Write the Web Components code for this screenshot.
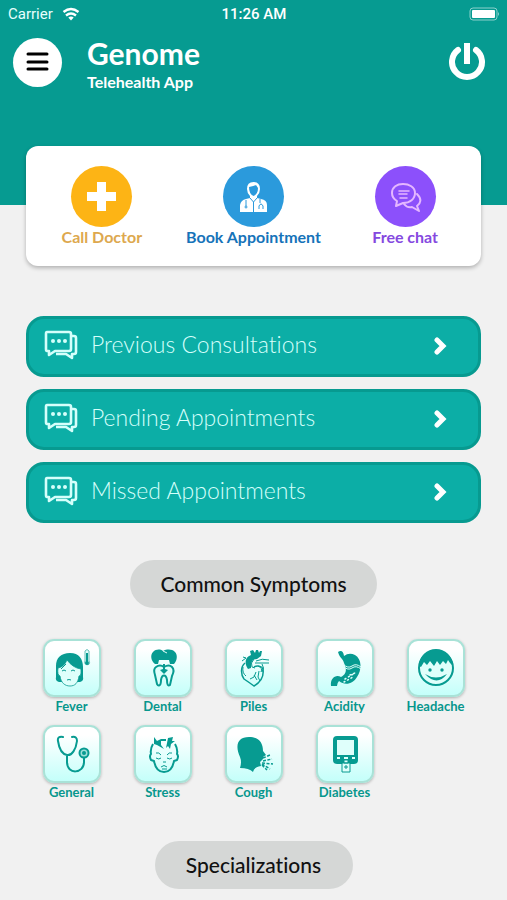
<!DOCTYPE html>
<html lang="en">
<head>
<meta charset="utf-8">
<meta name="viewport" content="width=device-width, initial-scale=1">
<title>Genome Telehealth App</title>
<style>
  html { background: #f1f1f1; }
  body { margin: 0; font-family: Lato, "Open Sans", sans-serif; font-variant-ligatures: none; }
</style>
</head>
<body>
<telehealth-app></telehealth-app>

<script>
const define = (name, html, setup) => {
  const template = document.createElement('template');
  template.innerHTML = html;
  customElements.define(name, class extends HTMLElement {
    constructor() {
      super();
      this.attachShadow({ mode: 'open' }).append(template.content.cloneNode(true));
    }
    connectedCallback() { if (setup) setup(this, this.shadowRoot); }
  });
};

const icons = {
  menu: `<g stroke="#000" stroke-width="3" stroke-linecap="round"><path d="M15 16H34M15 24H34M15 31H34"/></g>`,
  power: `<g fill="none" stroke="#fff" stroke-linecap="round" stroke-width="6"><path d="M9 8A15 15 0 1 0 27 8"/><path stroke-linecap="butt" d="M18 1V22"/></g>`,
  cross: `<path fill="#fff" d="M26 16h9v10h10v9H35v10h-9V35H16v-9h10z"/>`,
  doctor: `<g fill="#fff"><path d="M17 46v-7q1-5 6-6l4-1v-2q-3-3-3-7 0-7 6.500-7t6.500 7q0 4-3 7v2l4 1q6 1 6 6v7z"/></g>
    <path fill="#2b9adc" d="M26 21q5-1 7-2l2 3q0 6-4.500 8Q26 28 26 21z"/>
    <g fill="none" stroke="#2b9adc" stroke-width="1"><path d="M27 32l3.500 4 3.500-4M30.500 36v10M23 34v6M37 33v4M36 43v-3q2-4 4 0v3"/><circle cx="23" cy="41" r="1"/></g>`,
  chat: `<g fill="none" stroke="#e4b7ff" stroke-width="2" stroke-linejoin="round" stroke-linecap="round"><path d="M22 35q-5-3-5-8c0-6 5-9 11-9s12 3 12 9-5 10-12 10l-7 3z"/><path d="M42 28c5 5 4 9 0 12l2 5-7-4q-5 1-8-3"/><path stroke-width="1.500" d="M24 25h10M24 28h8M25 32h7"/></g>`,
  consult: `<g fill="none" stroke="#d5fffb" stroke-width="2.600" stroke-linejoin="round"><path d="M3 2h22q2 0 2 2v15q0 2-2 2H11l-6 4v-4H3q-1 0-1-2V4q0-2 1-2z"/><path d="M28 6h2q2 0 2 2v14q0 2-2 2h-2v4l-6-4H12"/></g><g fill="#d5fffb"><circle cx="9" cy="11" r="2"/><circle cx="15" cy="11" r="2"/><circle cx="21" cy="11" r="2"/></g>`,
  chevron: `<path fill="none" stroke="#fff" stroke-width="5" stroke-linecap="round" stroke-linejoin="miter" d="M4 3l6 6-6 6"/>`,
  wifi: `<g fill="none" stroke="#fff" stroke-width="2.4"><path d="M1.500 5q7.500-6 15 0M4 8.500q5-4 10 0"/></g><path fill="#fff" d="M6.300 10.500q2.700-2 5.400 0L9 13.500z"/>`,
  battery: `<rect x="1" y="1" width="27" height="12" rx="3" fill="none" stroke="#8bd0cb"/><rect x="3" y="3" width="23" height="8" rx="1" fill="#fff"/><path d="M29 5q2 2 0 4z" fill="#8bd0cb"/>`,
  Fever: `<path fill="#079b91" d="M16 43q-4-1-3-5V27C13 19 18 14 27 14s13 6 13 14v10q1 4-3 5z"/>
    <path fill="#dffffb" stroke="#079b91" stroke-width=".8" d="M15 29q6-1 9-8 6 8 14 9v4q0 3-2 3c-1 7-4 10-9 10s-9-3-10-10q-3-1-2-8z"/>
    <path fill="none" stroke="#079b91" stroke-width="1" d="M19 32q2-2 4 0m5 0q2-2 4 0M24 41q2-1 4 0M17 27l5-3M18 30l5-5"/>
    <path fill="#dffffb" stroke="#65bdb6" d="M42 22V12q2-3 4 0v10c3 5-6 5-4 0z"/><path stroke="#079b91" stroke-width="2" d="M44 14v10"/><circle cx="44" cy="24" r="2" fill="#079b91"/>`,
  Dental: `<path fill="#079b91" d="M21 25c-4-3-5-9-2-12s7-3 10-1c4-2 9-2 12 1s2 9-1 12h-4l-1-4H25l-1 4z"/><path stroke="#dffffb" fill="none" d="M29 12l4 2"/>
    <path fill="#dffffb" stroke="#079b91" stroke-width="2" d="M22 28q4-3 8 0 5-3 8 0c3 3 1 7 0 9l-2 9q-3 2-3-5c-1-6-5-6-6 0 0 7-3 6-4 4l-2-9c-1-3-2-6 1-8z"/><path fill="#079b91" d="M29 25h2v5l3 1-4 4-4-4 3-1z"/>`,
  Piles: `<path fill="#079b91" d="M23 30c-4-6-3-12 3-14l-1-4 3-1 2 3 1-3h2l1 3 1-2h2l-1 5-4 3c-5 0-6 3-6 9z"/>
    <g fill="none" stroke="#079b91" stroke-width="1"><path stroke-width="1.500" d="M20 24c-5 4-4 12-1 16q6 4 10 7c7-4 10-10 9-17-1-3-6-4-9-2"/><path d="M30 24h14M31 22q6-3 13-1M18 18l3 1M17 22l4-3M29 20q-4 4-2 8l3 1M33 27q5 2 3 6M31 33l-2 5-4 2M29 36l3 5M34 32l-1 6 2 4M18 28q-1 6 3 9M37 25q3 4 0 8"/></g>`,
  Acidity: `<path fill="#079b91" d="M22 13q5-3 6 4 5-4 11-1c7 4 7 15 2 22-4 7-12 9-18 4q-2 2-2 5h-6c-1-8 5-12 10-9 8-4 4-11 3-14-1-5-4-4-6-11z"/>
    <path fill="none" stroke="#dffffb" stroke-width="1" d="M27 25q5 5 9 2t9 1M27 27q5 5 9 2t9 1"/><path stroke="#dffffb" stroke-width="1.500" stroke-linecap="round" stroke-dasharray="1 3" d="M29 40l10-6M28 43l9-5M34 36l5-2"/>`,
  Headache: `<circle cx="29" cy="29" r="17" fill="#dffffb" stroke="#079b91" stroke-width="2"/><path fill="#079b91" d="M12 27c0-10 8-17 17-17s17 7 17 17l-3-3-2-3-2 4-3-3-3 4-3-4-3 5-4-5-3 4-3-3-3 5z"/><path fill="#079b91" d="M18 35q11 7 22 0-10 13-22 0z"/><circle cx="23" cy="31" r="1.700" fill="#079b91"/><circle cx="35" cy="31" r="1.700" fill="#079b91"/>`,
  General: `<g fill="none" stroke="#079b91" stroke-width="2" stroke-linecap="round"><path d="M20 12q-6-1-5 4c1 7 4 13 9 14s9-6 10-14q0-5-5-4M24 30v7c0 13 17 12 17 0v-5"/><circle cx="41" cy="28" r="4.500" fill="#9ddfd9"/></g><circle cx="41" cy="28" r="2" fill="#079b91"/>`,
  Stress: `<g fill="none" stroke="#079b91" stroke-width="2" stroke-linejoin="round"><path d="M19 19q-3 5-2 10-2 2 0 6l3 1q2 11 10 11t10-11l3-1q2-4 0-6 1-5-2-10M27 15h5"/><path stroke-width="1" d="M22 28q3-1 5 2M38 28q-3-1-5 2M22 33q3 2 5 0M33 33q3 2 5 0M29 37h3M27 42q3-3 6 0M28 44h5"/></g><path fill="#079b91" d="M20 12l3 4 4-2v6l3 4-7-4-3-1zM34 13l5-1-1 4h3l-4 3-1 5-2-3-2 2z"/>`,
  Cough: `<path fill="#079b91" d="M15 43q2-6 0-11C10 21 12 12 24 12c9 0 14 5 14 14l3 4-3 2v2l-3 3 1 4q-7 1-8 6-4-4-13-4z"/><path stroke="#079b91" stroke-width="1.500" stroke-dasharray="3 1.500" d="M38 33l7-3M38 36l9-2M37 38l11 1M37 39l8 5M37 40l5 5"/>`,
  Diabetes: `<rect x="17" y="11" width="25" height="28" rx="4" fill="#079b91"/><rect x="21" y="15" width="17" height="15" fill="#dffffb"/><path stroke="#dffffb" stroke-width="2" d="M21 33h3M28 33h4M36 33h3"/><path fill="#dffffb" stroke="#079b91" stroke-width="1" d="M26 38h8v9h-8zM28 35h4v3h-4zM28 42h4M30 40v4"/>`
};

define('app-icon', `<style>:host{display:block;flex:none}svg{display:block}</style><svg aria-hidden="true"></svg>`, (el, root) => {
  const [w, h] = el.getAttribute('box').split(' ');
  const svg = root.querySelector('svg');
  svg.setAttribute('viewBox', `0 0 ${w} ${h}`);
  svg.setAttribute('width', w);
  svg.setAttribute('height', h);
  svg.innerHTML = icons[el.getAttribute('name')];
});

define('status-bar', `<style>
  :host{display:grid;grid-template-columns:1fr auto 1fr;align-items:center;height:28px;padding:0 7px 0 8px;font:15px/20px Roboto,Inter,sans-serif;color:#e6fffd}
  .left{display:flex;gap:9px;align-items:center}
  strong{font-weight:500;color:#fff}
  .right{justify-self:end}
</style>
<div class="left"><span>Carrier</span><app-icon name="wifi" box="18 14"></app-icon></div><strong>11:26 AM</strong><app-icon class="right" name="battery" box="31 14"></app-icon>`);

define('app-header', `<style>
  :host{display:block;background:#069b91;height:205px;color:#fff}
  .bar{display:flex;align-items:flex-start;padding:6px 20px 0 13px}
  button{border:0;padding:0;background:none;cursor:pointer}
  .menu{width:49px;height:49px;margin-top:4px;border-radius:50%;background:#fff;flex:none}
  .titles{flex:1;margin-left:25px}
  h1{margin:0;font-size:30px;line-height:38px;font-weight:700}
  p{margin:0;font-size:16px;line-height:20px;font-weight:700}
  .power{margin-top:8px}
</style>
<status-bar></status-bar>
<div class="bar">
  <button class="menu" aria-label="Menu"><app-icon name="menu" box="49 49"></app-icon></button>
  <div class="titles"><h1>Genome</h1><p>Telehealth App</p></div>
  <button class="power" aria-label="Log out"><app-icon name="power" box="38 38"></app-icon></button>
</div>`);

define('quick-action', `<style>
  :host{display:block;text-align:center}
  button{display:inline-flex;flex-direction:column;align-items:center;border:0;padding:0;background:none;font:700 16px/20px Lato,sans-serif;color:var(--label);white-space:nowrap;cursor:pointer}
  .disc{width:61px;height:61px;border-radius:50%;background:var(--disc)}
</style><button><span class="disc"></span><slot></slot></button>`, (el, root) => {
  root.querySelector('.disc').innerHTML = `<app-icon name="${el.getAttribute('icon')}" box="61 61"></app-icon>`;
});

define('action-card', `<style>
  :host{display:grid;grid-template-columns:repeat(3,minmax(0,1fr));background:#fff;border-radius:12px;padding:20px 0 19px;box-shadow:0 2px 4px #0004}
</style><slot></slot>`);

define('nav-row', `<style>
  :host{display:block}
  button{display:flex;align-items:center;width:100%;height:61px;box-sizing:border-box;padding:0 30px 2px 15px;border:3px solid #079a90;border-radius:18px;background:#0caea6;color:#d5fffb;font:300 23px/28px Lato,sans-serif;font-variant-ligatures:none;text-align:left;cursor:pointer}
  .text{flex:1;margin-left:13px;padding-bottom:4px}
</style><button><app-icon name="consult" box="34 31"></app-icon><span class="text"><slot></slot></span><app-icon name="chevron" box="15 18"></app-icon></button>`);

define('section-chip', `<style>
  :host{display:flex;justify-content:center}
  h2{margin:0;box-sizing:border-box;min-width:198px;padding:10px 30px;border-radius:24px;background:#d5d7d6;color:#111;font-size:21px;line-height:28px;font-weight:500;text-align:center}
</style><h2><slot></slot></h2>`);

define('symptom-tile', `<style>
  :host{display:block;text-align:center}
  button{display:inline-flex;flex-direction:column;align-items:center;border:0;padding:0;background:none;color:#07978d;font:700 13px/18px Lato,sans-serif;cursor:pointer}
  .tile{display:grid;place-content:center;width:58px;height:58px;box-sizing:border-box;border:2px solid #a9e2d7;border-radius:11px;background:linear-gradient(#fff 15%,#c4fffa);box-shadow:0 1px 3px #0004}
</style><button><span class="tile"></span><slot></slot></button>`, (el, root) => {
  root.querySelector('.tile').innerHTML = `<app-icon name="${el.textContent}" box="58 58"></app-icon>`;
});

define('symptom-grid', `<style>
  :host{display:grid;grid-template-columns:repeat(5,minmax(0,1fr));row-gap:10px}
</style><slot></slot>`);

define('telehealth-app', `<style>
  :host{display:block}
  main{display:flex;flex-direction:column;padding:0 26px 11px;margin-top:-59px}
  nav{display:flex;flex-direction:column;gap:12px;margin:50px 0 37px}
  symptom-grid{margin:31px 0 40px}
  .call{--disc:#fdb415;--label:#dda84e}
  .book{--disc:#2b9adc;--label:#1673b9}
  .chat{--disc:#8c50fb;--label:#8549df}
</style>
<app-header></app-header>
<main>
  <action-card>
    <quick-action class="call" icon="cross">Call Doctor</quick-action>
    <quick-action class="book" icon="doctor">Book Appointment</quick-action>
    <quick-action class="chat" icon="chat">Free chat</quick-action>
  </action-card>
  <nav>
    <nav-row>Previous Consultations</nav-row>
    <nav-row>Pending Appointments</nav-row>
    <nav-row>Missed Appointments</nav-row>
  </nav>
  <section-chip>Common Symptoms</section-chip>
  <symptom-grid>
    <symptom-tile>Fever</symptom-tile><symptom-tile>Dental</symptom-tile><symptom-tile>Piles</symptom-tile><symptom-tile>Acidity</symptom-tile><symptom-tile>Headache</symptom-tile><symptom-tile>General</symptom-tile><symptom-tile>Stress</symptom-tile><symptom-tile>Cough</symptom-tile><symptom-tile>Diabetes</symptom-tile>
  </symptom-grid>
  <section-chip>Specializations</section-chip>
</main>`);
</script>
</body>
</html>
